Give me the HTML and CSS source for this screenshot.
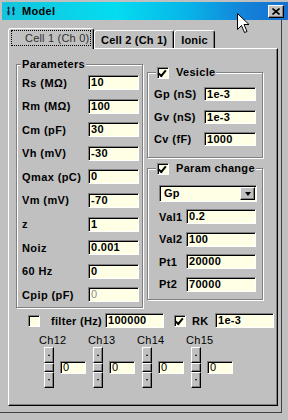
FILE: index.html
```html
<!DOCTYPE html>
<html lang="en">
<head>
  <meta charset="UTF-8"/>
  <meta name="viewport" content="width=device-width, initial-scale=1.0"/>
  <title>Model</title>
  <link rel="stylesheet" href="styles.css">
</head>
<body>
  <div class="titlebar">
    <svg class="app-icon" width="10" height="10" viewBox="0 0 10 10">
      <path d="M2.5 1v8M7.5 1v8M1 6h3M6 4h3" stroke="#102040" stroke-width="1.2" fill="none"/>
      <path d="M1 2.5L2.5 0.5L4 2.5ZM1 7.5L2.5 9.5L4 7.5ZM6 2.5L7.5 0.5L9 2.5ZM6 7.5L7.5 9.5L9 7.5Z" fill="#102040"/>
    </svg>
    <span class="title">Model</span>
    <div class="close">
      <svg width="8" height="7" viewBox="0 0 8 7"><path d="M0.5 0.5L7.5 6.5M7.5 0.5L0.5 6.5" stroke="#000" stroke-width="1.6"/></svg>
    </div>
  </div>

  <div class="frame">
    <div class="tabs">
      <div class="tab active"><span class="focus">Cell 1 (Ch 0)</span></div>
      <div class="tab">Cell 2 (Ch 1)</div>
      <div class="tab">Ionic</div>
    </div>

    <div class="panel">
      <div class="top">
        <!-- Parameters -->
        <div class="group params">
          <div class="group-title">Parameters</div>
          <div class="rows">
            <span>Rs (MΩ)</span><div class="field">10</div>
            <span>Rm (MΩ)</span><div class="field">100</div>
            <span>Cm (pF)</span><div class="field">30</div>
            <span>Vh (mV)</span><div class="field">-30</div>
            <span>Qmax (pC)</span><div class="field">0</div>
            <span>Vm (mV)</span><div class="field">-70</div>
            <span>z</span><div class="field">1</div>
            <span>Noiz</span><div class="field">0.001</div>
            <span>60 Hz</span><div class="field">0</div>
            <span>Cpip (pF)</span><div class="field disabled">0</div>
          </div>
        </div>

        <div class="side">
          <!-- Vesicle -->
          <div class="group vesicle">
            <div class="group-title check-title"><span class="check on"></span>Vesicle</div>
            <div class="rows">
              <span>Gp (nS)</span><div class="field">1e-3</div>
              <span>Gv (nS)</span><div class="field">1e-3</div>
              <span>Cv (fF)</span><div class="field">1000</div>
            </div>
          </div>

          <!-- Param change -->
          <div class="group change">
            <div class="group-title check-title"><span class="check on"></span>Param change</div>
            <div class="select">
              <span class="select-value">Gp</span>
              <span class="select-btn"><span class="arrow-down"></span></span>
            </div>
            <div class="rows">
              <span>Val1</span><div class="field">0.2</div>
              <span>Val2</span><div class="field">100</div>
              <span>Pt1</span><div class="field">20000</div>
              <span>Pt2</span><div class="field">70000</div>
            </div>
          </div>
        </div>
      </div>

      <div class="options">
        <span class="check"></span>
        <span class="opt-label">filter (Hz)</span>
        <div class="field opt-field">100000</div>
        <span class="check on rk-check"></span>
        <span class="opt-label rk-label">RK</span>
        <div class="field opt-field">1e-3</div>
      </div>

      <div class="channels">
        <div class="channel">
          <span class="ch-label">Ch12</span>
          <div class="ch-body">
            <div class="spin"><span class="spin-btn"><i class="up"></i></span><span class="spin-mid"></span><span class="spin-btn"><i class="down"></i></span></div>
            <div class="field ch-field">0</div>
          </div>
        </div>
        <div class="channel">
          <span class="ch-label">Ch13</span>
          <div class="ch-body">
            <div class="spin"><span class="spin-btn"><i class="up"></i></span><span class="spin-mid"></span><span class="spin-btn"><i class="down"></i></span></div>
            <div class="field ch-field">0</div>
          </div>
        </div>
        <div class="channel">
          <span class="ch-label">Ch14</span>
          <div class="ch-body">
            <div class="spin"><span class="spin-btn"><i class="up"></i></span><span class="spin-mid"></span><span class="spin-btn"><i class="down"></i></span></div>
            <div class="field ch-field">0</div>
          </div>
        </div>
        <div class="channel">
          <span class="ch-label">Ch15</span>
          <div class="ch-body">
            <div class="spin"><span class="spin-btn"><i class="up"></i></span><span class="spin-mid"></span><span class="spin-btn"><i class="down"></i></span></div>
            <div class="field ch-field">0</div>
          </div>
        </div>
      </div>
    </div>
  </div>

  <!-- mouse pointer -->
  <svg class="cursor" width="13" height="21" viewBox="0 0 13 21">
    <path d="M0.5 0.5V16.5L4.5 12.5L7.5 19.5L10 18.5L7 11.5H12Z" fill="#fff" stroke="#000" stroke-width="1" stroke-linejoin="miter"/>
  </svg>
</body>
</html>
```

FILE: styles.css
```css
* { box-sizing: border-box; }
body {
  margin: 0;
  width: 288px; height: 420px;
  overflow: hidden;
  position: relative;
  background: #c0c0c0;
  font-family: 'Liberation Sans', Arial, sans-serif;
  font-size: 11px;
  font-weight: bold;
  color: #000;
}

/* Title bar */
.titlebar {
  height: 18px;
  margin: 2px 0 0 2px;
  display: flex; align-items: center;
  background: linear-gradient(90deg, #14c4dc 0%, #04dcf0 40%, #08b4e8 65%, #1482d8 85%, #1470d0 100%);
}
.app-icon { margin-left: 4px; }
.title { margin-left: 6px; letter-spacing: 0.3px; }
.close {
  margin-left: auto; margin-right: 4px;
  width: 16px; height: 13px;
  background: #c0c0c0;
  border: 1px solid; border-color: #fff #000 #000 #fff;
  box-shadow: inset -1px -1px #808080;
  display: flex; align-items: center; justify-content: center;
}

/* Dialog frame + tabs */
.frame {
  width: 282px; height: 393px;
  padding: 8px 0 0 8px;
  border-right: 1px solid #404040;
  border-bottom: 1px solid #404040;
}
.tabs { display: flex; align-items: flex-end; height: 20px; }
.tab {
  height: 18px;
  padding: 0 6px;
  border: 1px solid; border-bottom: none;
  border-color: #fff #000 transparent #fff;
  box-shadow: inset -1px 0 #808080;
  border-radius: 3px 3px 0 0;
  display: flex; align-items: center;
  letter-spacing: 0.2px;
}
.tab.active {
  height: 21px; width: 86px;
  margin-bottom: -1px;
  padding: 0 2px;
  position: relative; z-index: 1;
  background: #c0c0c0;
  font-weight: normal;
  color: #303030;
  align-items: flex-start;
}
.focus {
  margin-top: 1px;
  width: 80px; height: 16px;
  padding-left: 13px;
  line-height: 14px;
  border: 1px dotted #000;
}

.panel {
  width: 270px; height: 358px;
  padding: 15px 0 0 7px;
  border: 1px solid; border-color: #fff #000 #000 #fff;
  box-shadow: inset -1px -1px #808080;
}

/* Group boxes */
.top { display: flex; gap: 4px; align-items: flex-start; }
.group {
  border: 1px solid #808080;
  box-shadow: 1px 1px 0 #fff, inset 1px 1px 0 #fff;
}
.group-title {
  width: max-content;
  height: 13px; line-height: 13px;
  margin: -7px 0 0 4px;
  padding: 0 1px;
  background: #c0c0c0;
  display: flex; align-items: center;
  letter-spacing: 0.3px;
}
.rows {
  display: grid;
  align-items: center;
  letter-spacing: 0.4px;
}
.params { width: 127px; height: 244px; }
.params .rows {
  grid-template-columns: 66px 51px;
  row-gap: 8.6px;
  margin-top: 4px;
  padding-left: 5px;
}
.params .field { height: 15px; }

.side {
  width: 116px;
  margin-top: 8px;
  display: flex; flex-direction: column; gap: 10px;
}
.check-title { margin-left: 8px; }
.vesicle { height: 86px; }
.vesicle .rows {
  grid-template-columns: 50px 52px;
  row-gap: 8.5px;
  margin-top: 8px;
  padding-left: 6px;
}
.vesicle .field { height: 14px; }

.change { height: 132px; }
.change .rows {
  grid-template-columns: 27px 70px;
  row-gap: 7.5px;
  margin-top: 7px;
  padding-left: 11px;
}
.change .field { height: 15px; }

/* Inputs */
.field {
  background: #ffffe6;
  border: 1px solid; border-color: #808080 #fff #fff #808080;
  box-shadow: inset 1px 1px #000;
  padding-left: 2px;
  line-height: 13px;
  letter-spacing: 0.3px;
  overflow: hidden;
  white-space: nowrap;
}
.field.disabled { color: #909090; font-weight: normal; }

.check {
  width: 12px; height: 12px;
  flex: none;
  margin-right: 7px;
  background: #ffffe6;
  border: 1px solid; border-color: #808080 #fff #fff #808080;
  box-shadow: inset 1px 1px #000;
  position: relative;
}
.check.on::after {
  content: '';
  position: absolute; left: 2px; top: 1px;
  width: 3px; height: 6px;
  border: solid #000; border-width: 0 2px 2px 0;
  transform: rotate(40deg);
  transform-origin: 60% 40%;
}

.select {
  width: 98px; height: 17px;
  margin: 10px 0 0 11px;
  display: flex;
  background: #ffffe6;
  border: 1px solid; border-color: #808080 #fff #fff #808080;
  box-shadow: inset 1px 1px #000;
}
.select-value { flex: 1; padding-left: 4px; line-height: 15px; letter-spacing: 0.3px; }
.select-btn {
  width: 15px; height: 13px; margin: 1px 1px 0 0;
  background: #c0c0c0;
  border: 1px solid; border-color: #fff #000 #000 #fff;
  box-shadow: inset -1px -1px #808080;
  display: flex; align-items: center; justify-content: center;
}
.arrow-down {
  width: 0; height: 0;
  border-left: 3.5px solid transparent;
  border-right: 3.5px solid transparent;
  border-top: 4px solid #000;
}

/* filter / RK row */
.options {
  display: flex; align-items: center;
  height: 15px;
  margin-top: 5px;
  padding-left: 12px;
}
.options .check { margin-right: 0; }
.opt-label { margin-left: 11px; width: 54px; letter-spacing: 0.3px; }
.opt-field { width: 59px; height: 15px; }
.rk-check { margin-left: 10px; }
.rk-label { margin-left: 6px; width: 23px; }

/* Channel spinners */
.channels { display: flex; margin-top: 6px; padding-left: 23px; }
.channel { width: 49px; display: flex; flex-direction: column; }
.ch-label { height: 13px; line-height: 13px; font-weight: normal; letter-spacing: 0.3px; }
.ch-body { display: flex; align-items: center; padding-left: 5px; }
.spin { width: 10px; display: flex; flex-direction: column; }
.spin-btn, .spin-mid {
  background: #c0c0c0;
  border: 1px solid; border-color: #fff #000 #000 #fff;
  box-shadow: inset -1px -1px #808080;
  display: flex; align-items: center; justify-content: center;
}
.spin-btn { height: 16px; }
.spin-mid { height: 9px; }
.up, .down {
  width: 0; height: 0;
  border-left: 1.5px solid transparent;
  border-right: 1.5px solid transparent;
}
.up { border-bottom: 2px solid #000; }
.down { border-top: 2px solid #000; }
.ch-field {
  width: 26px; height: 13px;
  margin-left: 6px;
  font-weight: normal;
  line-height: 11px;
}

.cursor { position: absolute; left: 237px; top: 13px; }
```
